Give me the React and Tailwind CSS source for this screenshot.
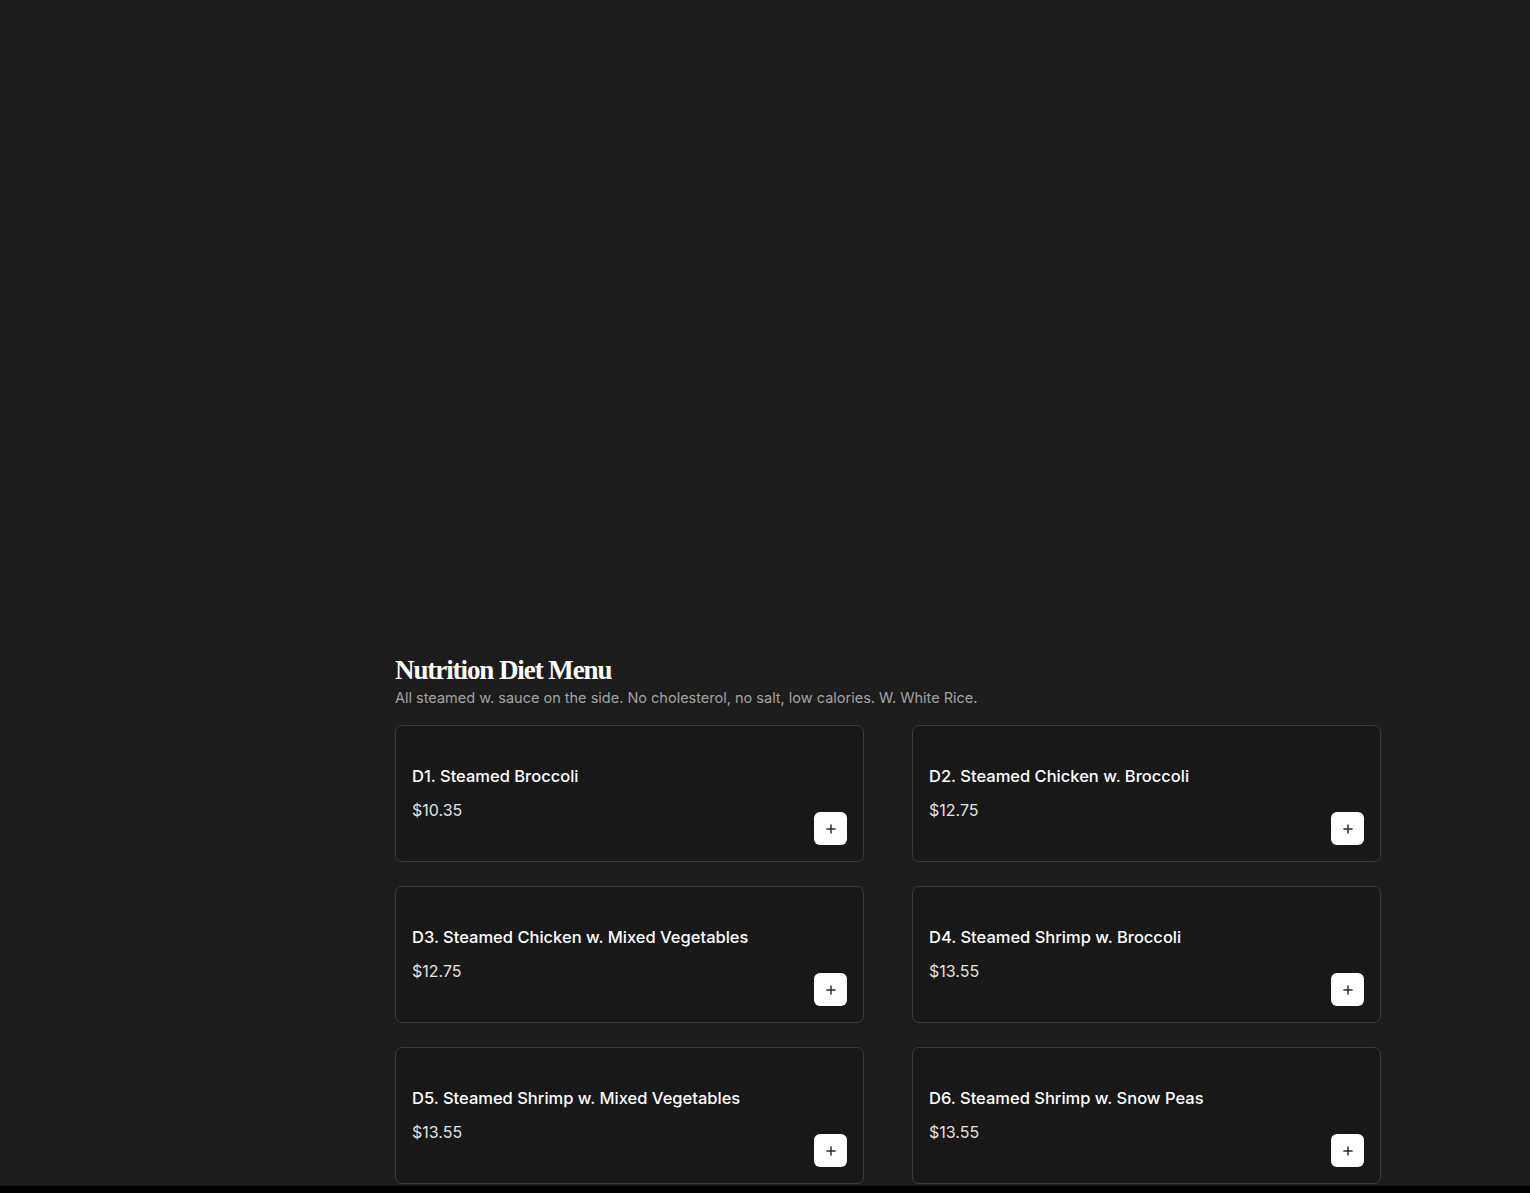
import React from 'react'
import { Plus } from 'lucide-react'

const items = [
    { name: "D1. Steamed Broccoli", price: "$10.35" },
    { name: "D2. Steamed Chicken w. Broccoli", price: "$12.75" },
    { name: "D3. Steamed Chicken w. Mixed Vegetables", price: "$12.75" },
    { name: "D4. Steamed Shrimp w. Broccoli", price: "$13.55" },
    { name: "D5. Steamed Shrimp w. Mixed Vegetables", price: "$13.55" },
    { name: "D6. Steamed Shrimp w. Snow Peas", price: "$13.55" },
]

const MenuCard = ({ name, price }) => (
    <div className="flex h-[137px] justify-between rounded-[7px] border border-[#3a3a3a] bg-[#181818] px-4">
        <div className="pt-[38px]">
            <div className="text-[16.5px] font-medium leading-6 text-white">{name}</div>
            <div className="mt-[10px] text-[16px] leading-6 text-[#e2e2e2]">{price}</div>
        </div>
        <div className="flex items-end pb-[16px]">
            <button className="flex h-[33px] w-[33px] items-center justify-center rounded-[6px] bg-white text-[#2a2a2a]">
                <Plus size={14} strokeWidth={2.5} />
            </button>
        </div>
    </div>
)

export default function App() {
    return (
        <div className="h-[1193px] bg-black" style={{ fontFamily: "Inter, 'Noto Sans', sans-serif" }}>
            <div className="h-[1186px] overflow-hidden bg-[#1c1c1c] pt-[654px]">
                <div className="ml-[395px] w-[986px]">
                    {/* Header */}
                    <h2
                        className="text-[27px] font-bold leading-8 tracking-[-0.04em] text-white"
                        style={{ fontFamily: "'Liberation Serif', 'DejaVu Serif', serif" }}
                    >
                        Nutrition Diet Menu
                    </h2>
                    <p className="mt-[2px] text-[14.5px] leading-5 text-[#a3a3a3]">
                        All steamed w. sauce on the side. No cholesterol, no salt, low calories. W. White Rice.
                    </p>

                    {/* Items */}
                    <div className="mt-[17px] grid grid-cols-2 gap-x-[48px] gap-y-[24px]">
                        {items.map((item) => (
                            <MenuCard key={item.name} {...item} />
                        ))}
                    </div>
                </div>
            </div>
        </div>
    )
}
